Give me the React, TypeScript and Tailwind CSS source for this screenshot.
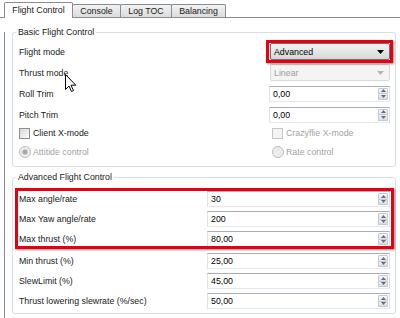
import React from "react";

const SpinArrows = () => (
  <div className="flex flex-col h-full w-[11px] py-[1px] pr-[1px] gap-0">
    <div className="flex-1 flex items-center justify-center border border-[#c7c9cd] bg-linear-to-b from-[#f7f7f7] to-[#e4e4e4] rounded-t-[1px]">
      <svg width="5" height="3" viewBox="0 0 5 3"><path d="M2.5 0 L5 3 L0 3 Z" fill="#5a6f94" /></svg>
    </div>
    <div className="flex-1 flex items-center justify-center border border-t-0 border-[#c7c9cd] bg-linear-to-b from-[#f0f0f0] to-[#dcdcdc] rounded-b-[1px]">
      <svg width="5" height="3" viewBox="0 0 5 3"><path d="M0 0 L5 0 L2.5 3 Z" fill="#5a6f94" /></svg>
    </div>
  </div>
);

const Spin = ({ value, w }: { value: string; w: string }) => (
  <div className={`flex items-center h-[16px] ${w} bg-white border border-[#abadb3] border-l-[#e2e3ea] border-r-[#dbdfe6] border-b-[#e3e9ef]`}>
    <div className="flex-1 pl-[3px] text-black">{value}</div>
    <SpinArrows />
  </div>
);

const Label = ({ children }: { children: React.ReactNode }) => (
  <div className="pl-[6px] text-[#1a1a1a] whitespace-nowrap">{children}</div>
);

const Checkbox = ({ disabled }: { disabled?: boolean }) => (
  <div
    className={
      disabled
        ? "w-[11px] h-[11px] border border-[#c6c6c6] bg-[#f4f4f4]"
        : "w-[11px] h-[11px] border border-[#8e8f8f] bg-linear-to-br from-[#d8d8d8] to-[#fbfbfb] p-[1px]"
    }
  />
);

const Radio = ({ checked }: { checked?: boolean }) => (
  <svg width="12" height="12" viewBox="0 0 12 12">
    <circle cx="6" cy="6" r="5.5" fill="#ececec" stroke="#bcbcbc" />
    {checked ? <circle cx="6" cy="6" r="2.6" fill="#a9a9a9" /> : null}
  </svg>
);

const Cursor = () => (
  <svg className="absolute left-[65px] top-[74px]" width="12" height="19" viewBox="0 0 12 19">
    <path d="M0.5 0.5 L0.5 15.5 L4 12 L6.5 17.5 L8.5 16.6 L6 11.2 L10.8 11.2 Z" fill="#ffffff" stroke="#000000" strokeWidth="1" strokeLinejoin="miter" />
  </svg>
);

export default function App() {
  return (
    <div className="w-[400px] h-[318px] bg-white relative overflow-hidden font-['Liberation_Sans',Arial,sans-serif] text-[8.8px] leading-[10px] text-[#1a1a1a]">
      {/* Tab bar */}
      <div className="flex items-end h-[18px] pl-[4px] border-b border-[#898c95]">
        <div className="relative z-10 -mb-px h-[16px] w-[69px] bg-white border border-[#898c95] border-b-0 rounded-t-[2px] flex items-center justify-center pb-[1px]">
          Flight Control
        </div>
        <div className="-ml-px h-[13px] w-[49px] border border-b-0 border-[#898c95] rounded-t-[2px] bg-linear-to-b from-[#f2f2f2] to-[#dcdcdc] flex items-center justify-center">
          Console
        </div>
        <div className="-ml-px h-[13px] w-[52px] border border-b-0 border-[#898c95] rounded-t-[2px] bg-linear-to-b from-[#f2f2f2] to-[#dcdcdc] flex items-center justify-center">
          Log TOC
        </div>
        <div className="-ml-px h-[13px] w-[55px] border border-b-0 border-[#898c95] rounded-t-[2px] bg-linear-to-b from-[#f2f2f2] to-[#dcdcdc] flex items-center justify-center">
          Balancing
        </div>
      </div>

      {/* Panel */}
      <div className="ml-[4px] border-l border-[#898c95] h-[300px] pl-[7px] bg-white">
        {/* Basic Flight Control */}
        <div className="relative mt-[14px] w-[384px] h-[135px] border border-[#d5dfe5] rounded-[3px] pt-[8px] pr-[5px]">
          <div className="absolute left-[3px] -top-[6px] bg-white px-[2px] text-[#1a1a1a]">Basic Flight Control</div>

          <div className="flex items-center h-[21px]">
            <Label>Flight mode</Label>
            <div className="relative ml-auto">
              <div className="flex items-center h-[17px] w-[120px] border border-[#707070] rounded-[2px] bg-linear-to-b from-[#f2f2f2] via-[#e6e6e6] to-[#d6d6d6] pl-[3px] pr-[5px] text-black">
                <span className="flex-1">Advanced</span>
                <svg width="7" height="4" viewBox="0 0 7 4"><path d="M0 0 L7 0 L3.5 4 Z" fill="#000" /></svg>
              </div>
              <div className="absolute -left-[4px] -right-[3px] -top-[3px] -bottom-[3px] border-[3px] border-[#e60012] shadow-[1px_1px_2px_rgba(0,0,0,0.45)]" />
            </div>
          </div>

          <div className="flex items-center h-[21px]">
            <Label>Thrust mode</Label>
            <div className="ml-auto flex items-center h-[17px] w-[120px] border border-[#d9d9d9] rounded-[2px] bg-[#f4f4f4] pl-[3px] pr-[5px] text-[#9d9d9d]">
              <span className="flex-1">Linear</span>
              <svg width="7" height="4" viewBox="0 0 7 4"><path d="M0 0 L7 0 L3.5 4 Z" fill="#b5b5b5" /></svg>
            </div>
          </div>

          <div className="flex items-center h-[21px]">
            <Label>Roll Trim</Label>
            <div className="ml-auto">
              <Spin value="0,00" w="w-[121px]" />
            </div>
          </div>

          <div className="flex items-center h-[21px]">
            <Label>Pitch Trim</Label>
            <div className="ml-auto">
              <Spin value="0,00" w="w-[121px]" />
            </div>
          </div>

          <div className="flex items-center h-[16px]">
            <div className="w-[259px] pl-[6px] flex items-center gap-[3px]">
              <Checkbox />
              <span>Client X-mode</span>
            </div>
            <div className="flex items-center gap-[3px] text-[#a3a3a3]">
              <Checkbox disabled />
              <span>Crazyflie X-mode</span>
            </div>
          </div>

          <div className="flex items-center h-[22px] text-[#a3a3a3]">
            <div className="w-[259px] pl-[6px] flex items-center gap-[2px]">
              <Radio checked />
              <span>Attitide control</span>
            </div>
            <div className="flex items-center gap-[2px]">
              <Radio />
              <span>Rate control</span>
            </div>
          </div>
        </div>

        {/* Advanced Flight Control */}
        <div className="relative mt-[10px] w-[384px] h-[137px] border border-[#d5dfe5] rounded-[3px] pt-[11px] pr-[5px]">
          <div className="absolute left-[3px] -top-[6px] bg-white px-[2px] text-[#1a1a1a]">Advanced Flight Control</div>

          <div className="relative">
            <div className="flex items-center h-[20px]">
              <Label>Max angle/rate</Label>
              <div className="ml-auto"><Spin value="30" w="w-[183px]" /></div>
            </div>
            <div className="flex items-center h-[20px]">
              <Label>Max Yaw angle/rate</Label>
              <div className="ml-auto"><Spin value="200" w="w-[183px]" /></div>
            </div>
            <div className="flex items-center h-[20px]">
              <Label>Max thrust (%)</Label>
              <div className="ml-auto"><Spin value="80,00" w="w-[183px]" /></div>
            </div>
            <div className="absolute left-[2px] -right-[4px] -top-[1px] bottom-0 border-[3px] border-[#e60012] shadow-[1px_1px_2px_rgba(0,0,0,0.45)]" />
          </div>

          <div className="mt-[2px] flex items-center h-[20px]">
            <Label>Min thrust (%)</Label>
            <div className="ml-auto"><Spin value="25,00" w="w-[183px]" /></div>
          </div>
          <div className="flex items-center h-[20px]">
            <Label>SlewLimit (%)</Label>
            <div className="ml-auto"><Spin value="45,00" w="w-[183px]" /></div>
          </div>
          <div className="flex items-center h-[20px]">
            <Label>Thrust lowering slewrate (%/sec)</Label>
            <div className="ml-auto"><Spin value="50,00" w="w-[183px]" /></div>
          </div>
        </div>
      </div>

      <Cursor />
    </div>
  );
}
